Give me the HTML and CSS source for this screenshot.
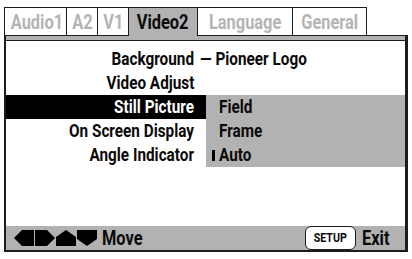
FILE: index.html
```html
<!DOCTYPE html>
<html lang="en">
<head>
    <meta charset="UTF-8">
    <meta name="viewport" content="width=device-width, initial-scale=1.0">
    <title>Setup - Video2</title>
    <link rel="stylesheet" href="styles.css">
</head>
<body>
    <div class="screen">
        <div class="tabs">
            <div class="tab"><span class="t">Audio1</span></div>
            <div class="tab"><span class="t">A2</span></div>
            <div class="tab"><span class="t">V1</span></div>
            <div class="tab active"><span class="t">Video2</span></div>
            <div class="tab"><span class="t">Language</span></div>
            <div class="tab"><span class="t">General</span></div>
        </div>
        <div class="panel">
            <div class="strip"></div>
            <div class="content">
                <div class="row">
                    <div class="label"><span class="t">Background</span></div>
                    <div class="value first"><span class="t">— Pioneer Logo</span></div>
                </div>
                <div class="row">
                    <div class="label"><span class="t">Video Adjust</span></div>
                    <div class="value"></div>
                </div>
                <div class="row">
                    <div class="label selected"><span class="t">Still Picture</span></div>
                    <div class="value option"><span class="t">Field</span></div>
                </div>
                <div class="row">
                    <div class="label"><span class="t">On Screen Display</span></div>
                    <div class="value option"><span class="t">Frame</span></div>
                </div>
                <div class="row">
                    <div class="label"><span class="t">Angle Indicator</span></div>
                    <div class="value option"><span class="mark"></span><span class="t">Auto</span></div>
                </div>
            </div>
            <div class="footer">
                <div class="arrows">
                    <svg width="20" height="16" viewBox="0 0 20 16"><polygon points="0,8 8,0 20,0 20,16 8,16" /></svg>
                    <svg width="20" height="16" viewBox="0 0 20 16"><polygon points="0,0 12,0 20,8 12,16 0,16" /></svg>
                    <svg width="20" height="16" viewBox="0 0 20 16"><polygon points="0,7 10,0 20,7 20,16 0,16" /></svg>
                    <svg width="20" height="16" viewBox="0 0 20 16"><polygon points="0,0 20,0 20,9 10,16 0,9" /></svg>
                </div>
                <span class="move t">Move</span>
                <div class="setup"><span class="t">SETUP</span></div>
                <span class="exit t">Exit</span>
            </div>
        </div>
    </div>
</body>
</html>
```

FILE: styles.css
```css
body {
    margin: 0;
    background-color: #ffffff;
    font-family: Roboto, "Liberation Sans", sans-serif;
    font-weight: bold;
    color: #0a0a0a;
}

.screen {
    width: 404px;
    margin: 7px 0 0 4px;
}

/* condensed look: the plain face squeezed sideways */
.t {
    display: inline-block;
    transform: scaleX(0.82);
    white-space: nowrap;
}

/* Tabs */
.tabs {
    display: flex;
    height: 28px;
}

.tab {
    box-sizing: border-box;
    height: 28px;
    border: 1px solid #1c1c1c;
    border-bottom: none;
    border-right: none;
    font-size: 20px;
    line-height: 29px;
    text-align: center;
    color: #b4b4b4;
    background-color: #ffffff;
}

.tab .t {
    transform-origin: center;
}

.tab:nth-child(1) { width: 62px; }
.tab:nth-child(2) { width: 31px; }
.tab:nth-child(3) { width: 31px; }
.tab:nth-child(4) { width: 69px; }
.tab:nth-child(5) { width: 95px; }
.tab:nth-child(6) { width: 75px; border-right: 1px solid #1c1c1c; }

.tab.active {
    background-color: #b2b2b2;
    color: #0a0a0a;
    position: relative;
    z-index: 1;
    height: 29px;
    margin-bottom: -1px;
}

/* Panel */
.panel {
    border: 2px solid #1c1c1c;
    border-top: 1px solid #1c1c1c;
    border-right-width: 3px;
}

.strip {
    height: 4px;
    background-color: #b2b2b2;
    border-bottom: 1px solid #1c1c1c;
}

.content {
    height: 185px;
    padding-top: 6px;
    box-sizing: border-box;
}

.row {
    display: grid;
    grid-template-columns: 200px 1fr;
    height: 24px;
    font-size: 18px;
    line-height: 24px;
}

.row .t {
    transform: scaleX(0.85);
}

.label {
    text-align: right;
    padding-right: 12px;
}

.label .t {
    transform-origin: right center;
}

.label.selected {
    background-color: #000000;
    color: #ffffff;
}

.value {
    padding-left: 13px;
    white-space: nowrap;
}

.value .t {
    transform-origin: left center;
}

.value.first {
    padding-left: 0;
}

.value.first .t {
    margin-left: -6px;
}

.value.option {
    background-color: #b2b2b2;
}

.mark {
    display: inline-block;
    width: 3px;
    height: 11px;
    margin-left: -7px;
    margin-right: 4px;
    background-color: #000000;
}

/* Footer */
.footer {
    display: flex;
    align-items: center;
    height: 24px;
    background-color: #b2b2b2;
    font-size: 20px;
}

.arrows {
    display: flex;
    gap: 1px;
    margin-left: 8px;
}

.arrows svg {
    display: block;
    fill: #000000;
}

.move {
    margin-left: 5px;
    transform-origin: left center;
}

.setup {
    margin-left: auto;
    height: 24px;
    width: 51px;
    box-sizing: border-box;
    border: 1px solid #1c1c1c;
    border-radius: 6px;
    background-color: #ffffff;
    font-size: 13px;
    line-height: 22px;
    text-align: center;
}

.exit {
    margin-left: 0;
    margin-right: 16px;
    transform-origin: right center;
}
```
